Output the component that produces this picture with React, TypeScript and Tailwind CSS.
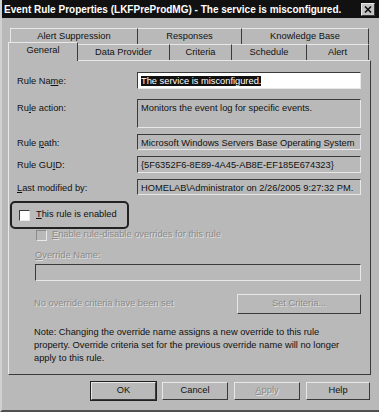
import React from "react";

const raised = "border border-t-[#e8e8e8] border-l-[#e8e8e8] border-r-[#3a3a3a] border-b-[#3a3a3a]";
const sunken = "border border-t-[#3a3a3a] border-l-[#3a3a3a] border-r-[#e8e8e8] border-b-[#e8e8e8]";

function Field({ h, children, white }: { h: string; children?: React.ReactNode; white?: boolean }) {
  return (
    <div className={`${h} w-[224px] ${sunken} ${white ? "bg-white" : "bg-[#b9b9b9]"} px-[3px] pt-[2px] leading-[12px] whitespace-nowrap overflow-hidden`}>
      {children}
    </div>
  );
}

function Row({ label, u, rest, mt, children }: { label: string; u: string; rest: string; mt: string; children: React.ReactNode }) {
  return (
    <div className={`flex ${mt}`}>
      <div className="w-[120px] pt-[3px] leading-[12px]">
        {label}
        <span className="underline">{u}</span>
        {rest}
      </div>
      {children}
    </div>
  );
}

function Btn({ children, w, disabled, def }: { children: React.ReactNode; w: string; disabled?: boolean; def?: boolean }) {
  return (
    <div className={`${w} h-[18px] ${def ? "outline outline-1 outline-[#202020]" : ""} ${raised} flex items-center justify-center ${disabled ? "text-[#8a8a8a] [text-shadow:1px_1px_0_#e0e0e0]" : ""}`}>
      {children}
    </div>
  );
}

export default function App() {
  return (
    <div
      className="w-[379px] h-[412px] bg-[#b9b9b9] text-[#111] text-[9.3px] flex flex-col overflow-hidden border-l-2 border-l-[#d0d0d0] border-b-2 border-b-[#505050]"
      style={{ fontFamily: '"Liberation Sans", Arial, sans-serif' }}
    >
      {/* Title bar */}
      <div className="h-[18px] bg-[#111] flex items-center justify-between pl-[2px] pr-[4px]">
        <span className="text-white font-bold text-[10px] whitespace-nowrap">
          Event Rule Properties (LKFPreProdMG) - The service is misconfigured.
        </span>
        <div className={`w-[14px] h-[13px] bg-[#c4c4c4] ${raised} flex items-center justify-center`}>
          <svg width="8" height="7" viewBox="0 0 8 7">
            <path d="M1 0.5 L7 6.5 M7 0.5 L1 6.5" stroke="#111" strokeWidth="1.6" />
          </svg>
        </div>
      </div>

      {/* Tabs */}
      <div className="pl-[6px] pr-[8px] pt-[10px]">
        <div className="ml-[2px] h-[16px] flex">
          <div className="w-[128px] border-t border-l border-t-[#e8e8e8] border-l-[#e8e8e8] border-r border-r-[#3a3a3a] flex items-center justify-center">Alert Suppression</div>
          <div className="w-[104px] border-t border-t-[#e8e8e8] border-r border-r-[#3a3a3a] flex items-center justify-center">Responses</div>
          <div className="w-[127px] border-t border-t-[#e8e8e8] border-r border-r-[#3a3a3a] flex items-center justify-center">Knowledge Base</div>
        </div>
        <div className="h-[16px] flex items-end">
          <div className="relative z-10 w-[70px] h-[19px] -mt-[3px] -mb-[1px] bg-[#b9b9b9] border-t border-l border-t-[#e8e8e8] border-l-[#e8e8e8] border-r border-r-[#3a3a3a] flex items-center justify-center pb-[2px]">General</div>
          <div className="w-[92px] h-[16px] border-t border-t-[#e8e8e8] border-r border-r-[#3a3a3a] flex items-center justify-center">Data Provider</div>
          <div className="w-[62px] h-[16px] border-t border-t-[#e8e8e8] border-r border-r-[#3a3a3a] flex items-center justify-center">Criteria</div>
          <div className="w-[75px] h-[16px] border-t border-t-[#e8e8e8] border-r border-r-[#3a3a3a] flex items-center justify-center">Schedule</div>
          <div className="w-[62px] h-[16px] border-t border-t-[#e8e8e8] border-r border-r-[#3a3a3a] flex items-center justify-center">Alert</div>
        </div>

        {/* Panel */}
        <div className={`h-[315px] ${raised} pl-[8px] pr-[9px] pt-[11px] flex flex-col`}>
          <Row label="Rule Na" u="m" rest="e:" mt="">
            <Field h="h-[17px]" white>
              <span className="bg-[#111] text-white">The service is misconfigured.</span>
            </Field>
          </Row>
          <Row label="Ru" u="l" rest="e action:" mt="mt-[10px]">
            <Field h="h-[29px]">Monitors the event log for specific events.</Field>
          </Row>
          <Row label="Rule " u="p" rest="ath:" mt="mt-[6px]">
            <Field h="h-[16px]">Microsoft Windows Servers Base Operating System</Field>
          </Row>
          <Row label="Rule GU" u="I" rest="D:" mt="mt-[6px]">
            <Field h="h-[17px]">{"{5F6352F6-8E89-4A45-AB8E-EF185E674323}"}</Field>
          </Row>
          <Row label="" u="L" rest="ast modified by:" mt="mt-[6px]">
            <Field h="h-[16px]">HOMELAB\Administrator on 2/26/2005 9:27:32 PM.</Field>
          </Row>

          {/* Enabled checkbox with highlight */}
          <div className="mt-[6px] -ml-[7px] w-[119px] h-[28px] rounded-[5px] border-2 border-[#222] flex items-center pl-[7px] gap-[6px]">
            <div className={`w-[11px] h-[11px] bg-white ${sunken}`} />
            <span>
              <span className="underline">T</span>his rule is enabled
            </span>
          </div>

          {/* Disabled sub options */}
          <div className="ml-[19px] flex items-center gap-[5px] h-[12px]">
            <div className={`w-[11px] h-[11px] ${sunken} border-t-[#8a8a8a] border-l-[#8a8a8a]`} />
            <span className="text-[#8a8a8a] [text-shadow:1px_1px_0_#e0e0e0]">
              <span className="underline">E</span>nable rule-disable overrides for this rule
            </span>
          </div>
          <div className="ml-[18px] mt-[8px] leading-[12px] text-[#8a8a8a] [text-shadow:1px_1px_0_#e0e0e0]">
            <span className="underline">O</span>verride Name:
          </div>
          <div className={`ml-[18px] mt-[3px] h-[17px] ${sunken}`} />

          <div className="ml-[17px] mt-[13px] flex items-center justify-between">
            <span className="text-[#8a8a8a] [text-shadow:1px_1px_0_#e0e0e0]">No override criteria have been set</span>
            <div className={`w-[124px] h-[20px] ${raised} flex items-center justify-center text-[#8a8a8a] [text-shadow:1px_1px_0_#e0e0e0]`}>
              Set Criteria...
            </div>
          </div>

          <div className="ml-[17px] mt-[12px] leading-[13px]">
            Note: Changing the override name assigns a new override to this rule
            <br />
            property. Override criteria set for the previous override name will no longer
            <br />
            apply to this rule.
          </div>
        </div>

        {/* Buttons */}
        <div className="mt-[7px] flex justify-end gap-[6px] pr-[1px]">
          <Btn w="w-[65px]" def>OK</Btn>
          <Btn w="w-[66px]">Cancel</Btn>
          <Btn w="w-[66px]" disabled>
            <span><span className="underline">A</span>pply</span>
          </Btn>
          <Btn w="w-[64px]">Help</Btn>
        </div>
      </div>
    </div>
  );
}
